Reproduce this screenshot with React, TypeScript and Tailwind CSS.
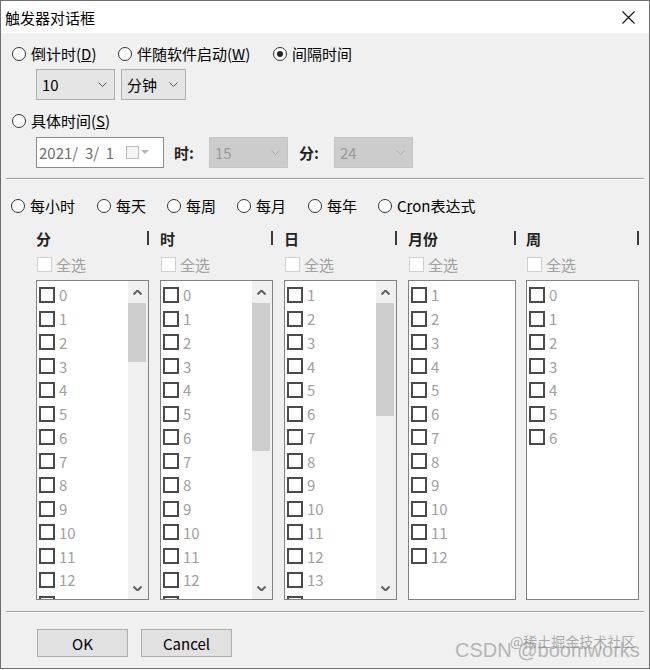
import clsx from "clsx";

function Chevron({ color = "#555", up = false, bold = false }: { color?: string; up?: boolean; bold?: boolean }) {
  return (
    <svg width="9" height="5" viewBox="0 0 9 5" className="shrink-0">
      <polyline
        points={up ? "0.5,4.5 4.5,0.5 8.5,4.5" : "0.5,0.5 4.5,4.5 8.5,0.5"}
        fill="none"
        stroke={color}
        strokeWidth={bold ? 2 : 1}
      />
    </svg>
  );
}

function Radio({ checked, children, className }: { checked?: boolean; children: React.ReactNode; className?: string }) {
  return (
    <div className={clsx("flex items-center h-[22px] shrink-0", className)}>
      <span className="w-[14px] h-[14px] rounded-full border border-[#333] bg-white flex items-center justify-center shrink-0">
        {checked && <span className="w-[6px] h-[6px] rounded-full bg-[#222]" />}
      </span>
      <span className="ml-[5px] text-[15px] leading-[22px] text-black whitespace-nowrap">{children}</span>
    </div>
  );
}

function Combo({ value, className, disabled }: { value: string; className?: string; disabled?: boolean }) {
  return (
    <div
      className={clsx(
        "h-[31px] flex items-center justify-between pl-[5px] pr-[7px] border",
        disabled ? "bg-[#cccccc] border-[#c4c4c4] text-[#9a9a9a]" : "bg-[#e5e5e5] border-[#adadad] text-black",
        className
      )}
    >
      <span className="text-[15px] leading-none">{value}</span>
      <Chevron color={disabled ? "#a8a8a8" : "#555"} />
    </div>
  );
}

// only the rows that show in the box are rendered; the last one peeks at the bottom edge
function ListBox({
  items,
  className,
  thumb,
}: {
  items: number[];
  className?: string;
  thumb?: number;
}) {
  return (
    <div className={clsx("h-[320px] border border-[#828282] bg-white flex overflow-hidden", className)}>
      <div className="flex-1 pl-[2px] pt-[2px] overflow-hidden">
        {items.map((n, i) => (
          <div key={n} className="h-[23.75px] flex items-center">
            <span className="w-[16px] h-[16px] border-2 border-[#4a4a4a] bg-white shrink-0" />
            {i < 13 && <span className="ml-[4px] text-[15px] leading-none text-[#a0a0a0]">{n}</span>}
          </div>
        ))}
      </div>
      {thumb !== undefined && (
        <div className="w-[20px] bg-[#f0f0f0] flex flex-col pr-[2px]">
          <div className="h-[22px] flex items-center justify-center">
            <Chevron up bold color="#606060" />
          </div>
          <div className="bg-[#cdcdcd]" style={{ height: thumb }} />
          <div className="flex-1" />
          <div className="h-[22px] flex items-center justify-center">
            <Chevron bold color="#606060" />
          </div>
        </div>
      )}
    </div>
  );
}

function Column({ label, items, thumb, className }: { label: string; items: number[]; thumb?: number; className?: string }) {
  return (
    <div className={clsx("flex flex-col shrink-0", className)}>
      <div className="h-[20px] flex items-center justify-between">
        <span className="text-[15px] font-bold leading-none text-[#222]">{label}</span>
        <span className="w-[2px] h-[14px] bg-[#3a3a3a]" />
      </div>
      <div className="mt-[8px] h-[17px] flex items-center pl-[1px]">
        <span className="w-[15px] h-[15px] border border-[#cfcfcf] bg-white" />
        <span className="ml-[4px] text-[15px] leading-none text-[#a0a0a0]">全选</span>
      </div>
      <ListBox className="mt-[7px]" items={items} thumb={thumb} />
    </div>
  );
}

const range = (a: number, b: number) => Array.from({ length: b - a + 1 }, (_, i) => a + i);

export default function App() {
  return (
    <div className="relative w-[650px] h-[670px] bg-white font-['Noto_Sans_CJK_SC',sans-serif] text-black">
      <div className="h-[669px] border border-[#6f6f6f] bg-[#f0f0f0] flex flex-col">
        {/* title bar */}
        <div className="h-[32px] bg-white flex items-center justify-between pl-[4px] pr-[14px]">
          <span className="text-[15px] leading-none">触发器对话框</span>
          <svg width="13" height="13" viewBox="0 0 13 13">
            <path d="M0.5 0.5 L12.5 12.5 M12.5 0.5 L0.5 12.5" stroke="#111" strokeWidth="1.1" />
          </svg>
        </div>

        {/* countdown / startup / interval */}
        <div className="mt-[10px] flex pl-[11px]">
          <Radio className="w-[106px]">
            倒计时(<span className="underline">D</span>)
          </Radio>
          <Radio className="w-[155px]">
            伴随软件启动(<span className="underline">W</span>)
          </Radio>
          <Radio checked>间隔时间</Radio>
        </div>
        <div className="mt-[4px] flex pl-[35px] gap-[6px]">
          <Combo value="10" className="w-[79px]" />
          <Combo value="分钟" className="w-[65px]" />
        </div>

        {/* specific time */}
        <div className="mt-[10px] flex pl-[11px]">
          <Radio>
            具体时间(<span className="underline">S</span>)
          </Radio>
        </div>
        <div className="mt-[5px] flex items-center pl-[35px]">
          <div className="w-[128px] h-[31px] bg-white border border-[#8a8a8a] flex items-center pl-[2px]">
            <span className="text-[15px] leading-none text-[#6e6e6e] whitespace-pre">2021/  3/  1</span>
            <span className="ml-[12px] w-[13px] h-[13px] border border-[#bdbdbd] bg-[#f4f4f4]" />
            <svg width="8" height="5" viewBox="0 0 8 5" className="ml-[2px]">
              <path d="M0 0 L8 0 L4 4 Z" fill="#b8b8b8" />
            </svg>
          </div>
          <span className="ml-[10px] w-[35px] text-[15px] font-bold leading-none text-[#222]">时:</span>
          <Combo value="15" disabled className="w-[79px]" />
          <span className="ml-[11px] w-[35px] text-[15px] font-bold leading-none text-[#222]">分:</span>
          <Combo value="24" disabled className="w-[79px]" />
        </div>

        <div className="mt-[10px] mx-[5px] border-t border-[#a0a0a0] border-b border-b-white" />

        {/* periods */}
        <div className="mt-[15px] flex pl-[10px]">
          <Radio className="w-[86px]">每小时</Radio>
          <Radio className="w-[70px]">每天</Radio>
          <Radio className="w-[70px]">每周</Radio>
          <Radio className="w-[71px]">每月</Radio>
          <Radio className="w-[70px]">每年</Radio>
          <Radio>
            C<span className="underline">r</span>on表达式
          </Radio>
        </div>

        <div className="mt-[11px] flex pl-[35px]">
          <Column label="分" items={range(0, 13)} thumb={59} className="w-[113px]" />
          <Column label="时" items={range(0, 13)} thumb={148} className="w-[113px] ml-[11px]" />
          <Column label="日" items={range(1, 14)} thumb={113} className="w-[113px] ml-[11px]" />
          <Column label="月份" items={range(1, 12)} className="w-[108px] ml-[11px]" />
          <Column label="周" items={range(0, 6)} className="w-[113px] ml-[10px]" />
        </div>

        <div className="mt-[11px] mx-[5px] border-t border-[#a0a0a0] border-b border-b-white" />

        <div className="mt-[16px] flex pl-[36px] gap-[13px]">
          <button className="w-[91px] h-[28px] bg-[#e1e1e1] border border-[#adadad] text-[15px] leading-none">OK</button>
          <button className="w-[91px] h-[28px] bg-[#e1e1e1] border border-[#adadad] text-[15px] leading-none">Cancel</button>
        </div>
      </div>

      {/* watermark */}
      <span className="absolute left-[455px] top-[640px] text-[20px] leading-none text-[#b4b4b4] font-['Liberation_Sans',sans-serif] whitespace-nowrap">
        CSDN @boomworks
      </span>
      <span className="absolute left-[510px] top-[634px] text-[14px] leading-none text-[#8a8a8a]/70 whitespace-nowrap">
        @稀土掘金技术社区
      </span>
    </div>
  );
}
